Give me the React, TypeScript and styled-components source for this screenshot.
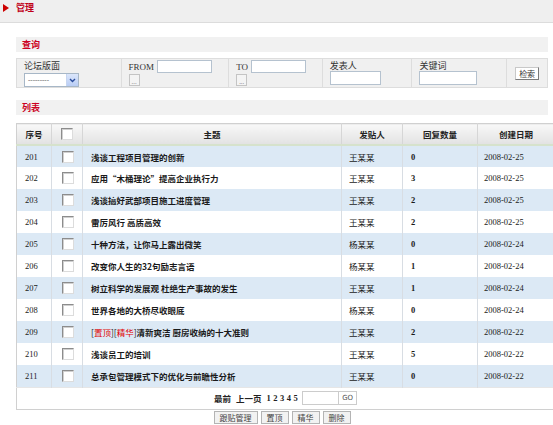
import styled, { createGlobalStyle } from "styled-components";

const GlobalStyle = createGlobalStyle`
  html, body {
    margin: 0;
    padding: 0;
    background: #ffffff;
  }
  body {
    font-family: "Noto Sans CJK SC", "Liberation Sans", sans-serif;
    font-size: 9px;
    color: #222222;
  }
`;

const cjk = `"Noto Sans CJK SC", "Liberation Sans", sans-serif`;
const serif = `"Liberation Serif", "Noto Sans CJK SC", serif`;

const TopBar = styled.div`
  height: 23px;
  box-sizing: border-box;
  background: #efefef;
  border-bottom: 1px solid #dcdcdc;
  display: flex;
  align-items: center;
  padding-left: 3px;
  gap: 7px;
`;

const Arrow = styled.span`
  width: 0;
  height: 0;
  border-top: 4px solid transparent;
  border-bottom: 4px solid transparent;
  border-left: 6px solid #cc0000;
  margin-top: -6px;
`;

const PageTitle = styled.div`
  font-family: ${cjk};
  font-weight: 700;
  font-size: 9px;
  color: #c00018;
  margin-top: -7px;
`;

const Content = styled.div`
  padding: 14px 5px 0 16px;
  display: flex;
  flex-direction: column;
`;

const SectionHead = styled.div<{ $gap: number }>`
  height: 15px;
  background: #f1f1f1;
  display: flex;
  align-items: center;
  padding-left: 6px;
  font-weight: 700;
  font-size: 9px;
  color: #cc0022;
  margin-bottom: ${(p) => p.$gap}px;
`;

const QueryBar = styled.div`
  display: flex;
  height: 30px;
  box-sizing: border-box;
  background: #f0f0f0;
  border: 1px solid #dddddd;
  margin-bottom: 12px;
`;

const QueryCell = styled.div<{ $w: number; $center?: boolean }>`
  width: ${(p) => p.$w}px;
  box-sizing: border-box;
  border-left: 1px solid #dddddd;
  padding: 1px 0 0 7px;
  display: flex;
  flex-direction: column;
  justify-content: ${(p) => (p.$center ? "center" : "flex-start")};
  &:first-child {
    border-left: none;
  }
`;

const Label = styled.div`
  font-size: 9px;
  color: #333333;
  line-height: 11px;
  height: 11px;
`;

const LatinLabel = styled.span`
  font-family: ${serif};
  font-size: 9px;
  color: #333333;
`;

const InlineRow = styled.div`
  display: flex;
  align-items: center;
  gap: 3px;
`;

const TextBox = styled.div<{ $w: number; $h?: number; $soft?: boolean }>`
  width: ${(p) => p.$w}px;
  height: ${(p) => p.$h ?? 13}px;
  box-sizing: border-box;
  background: #ffffff;
  border: 1px solid ${(p) => (p.$soft ? "#cccccc" : "#b5c2cf")};
`;

const DotsButton = styled.div`
  width: 11px;
  height: 12px;
  box-sizing: border-box;
  margin-top: 1px;
  background: #f4f4f4;
  border: 1px solid #c4c4c4;
  font-size: 6px;
  line-height: 14px;
  color: #666666;
  text-align: center;
  overflow: hidden;
`;

const Select = styled.div`
  width: 55px;
  height: 14px;
  box-sizing: border-box;
  margin-top: 2px;
  background: #ffffff;
  border: 1px solid #a7b7c7;
  display: flex;
  align-items: center;
  justify-content: space-between;
  padding-left: 3px;
  font-family: ${serif};
  font-size: 7px;
  color: #333333;
`;

const SelectArrow = styled.div`
  width: 11px;
  height: 12px;
  background: linear-gradient(#dbe6fb, #b9cdf5);
  border-left: 1px solid #c6d5f0;
  display: flex;
  align-items: center;
  justify-content: center;
`;

const SearchButton = styled.div`
  width: 24px;
  height: 13px;
  box-sizing: border-box;
  border: 1px solid;
  border-color: #c8c8c8 #7a7a7a #7a7a7a #c8c8c8;
  background: #ffffff;
  font-size: 8px;
  line-height: 11px;
  text-align: center;
  color: #333333;
  margin-left: 1px;
`;

const ListTable = styled.table`
  width: 532px;
  border-collapse: collapse;
  table-layout: fixed;
  border: 1px solid #d0d0d0;
  margin-top: 8px;
`;

const HeadCell = styled.th<{ $w: number }>`
  width: ${(p) => p.$w}px;
  height: 20px;
  padding: 0;
  background: linear-gradient(#f8f8f8, #e2e2e2);
  border-left: 1px solid #d6d6d6;
  border-bottom: 2px solid #d6e2cc;
  font-family: ${cjk};
  font-weight: 700;
  font-size: 8.5px;
  color: #222222;
  text-align: center;
  &:first-child {
    border-left: none;
  }
`;

const Row = styled.tr<{ $alt: boolean }>`
  height: 22px;
  background: ${(p) => (p.$alt ? "#dce9f5" : "#ffffff")};
`;

const Cell = styled.td<{ $pad?: number; $bold?: boolean; $serif?: boolean }>`
  padding: 0 0 0 ${(p) => p.$pad ?? 8}px;
  border-left: 1px solid #d8dde3;
  font-family: ${(p) => (p.$serif ? serif : cjk)};
  font-weight: ${(p) => (p.$bold ? 700 : 400)};
  font-size: 8.5px;
  color: #1a1a1a;
  white-space: nowrap;
  overflow: hidden;
  &:first-child {
    border-left: none;
  }
`;

const Check = styled.span<{ $center?: boolean }>`
  display: block;
  width: 12px;
  height: 12px;
  box-sizing: border-box;
  margin: ${(p) => (p.$center ? "0 auto" : "0 0 0 2px")};
  background: #ffffff;
  border: 1px solid;
  border-color: #8c8c8c #dcdcdc #dcdcdc #8c8c8c;
  box-shadow: inset 1px 1px 0 #d0d0d0;
`;

const Tag = styled.span`
  font-weight: 400;
  color: #e00000;
`;

const Bracket = styled.span`
  color: #222222;
`;

const PagerCell = styled.td`
  height: 21px;
  padding: 0;
  background: #ffffff;
  border-top: 1px solid #e6e6e6;
`;

const Pager = styled.div`
  display: flex;
  align-items: center;
  justify-content: center;
  gap: 5px;
  font-family: ${cjk};
  font-weight: 700;
  font-size: 8.5px;
  color: #222222;
`;

const PageNums = styled.span`
  font-family: ${serif};
  font-weight: 700;
  letter-spacing: 2.5px;
`;

const PagerForm = styled.div`
  display: flex;
  align-items: center;
  margin-left: -3px;
`;

const GoButton = styled.div`
  height: 14px;
  box-sizing: border-box;
  padding: 0 3px;
  border: 1px solid #cccccc;
  border-left: none;
  background: #ffffff;
  font-family: "DejaVu Sans", sans-serif;
  font-weight: 400;
  font-size: 7px;
  line-height: 12px;
  color: #555555;
`;

const ActionBar = styled.div`
  display: flex;
  justify-content: center;
  gap: 3px;
  padding-top: 1px;
  width: 532px;
`;

const ActionButton = styled.div`
  height: 13px;
  box-sizing: border-box;
  padding: 0 5px;
  background: #f2f2f2;
  border: 1px solid #b4b4b4;
  font-size: 8px;
  line-height: 11px;
  color: #444444;
`;

type Post = {
  id: number;
  title: string;
  author: string;
  replies: number;
  date: string;
  tags?: string[];
};

const posts: Post[] = [
  { id: 201, title: "浅谈工程项目管理的创新", author: "王某某", replies: 0, date: "2008-02-25" },
  { id: 202, title: "应用“木桶理论”提高企业执行力", author: "王某某", replies: 3, date: "2008-02-25" },
  { id: 203, title: "浅谈搞好武部项目施工进度管理", author: "王某某", replies: 2, date: "2008-02-25" },
  { id: 204, title: "雷厉风行 高质高效", author: "王某某", replies: 2, date: "2008-02-25" },
  { id: 205, title: "十种方法，让你马上露出微笑", author: "杨某某", replies: 0, date: "2008-02-24" },
  { id: 206, title: "改变你人生的32句励志言语", author: "杨某某", replies: 1, date: "2008-02-24" },
  { id: 207, title: "树立科学的发展观 杜绝生产事故的发生", author: "王某某", replies: 1, date: "2008-02-24" },
  { id: 208, title: "世界各地的大桥尽收眼底", author: "杨某某", replies: 0, date: "2008-02-24" },
  { id: 209, title: "清新爽洁 厨房收纳的十大准则", author: "王某某", replies: 2, date: "2008-02-22", tags: ["置顶", "精华"] },
  { id: 210, title: "浅谈员工的培训", author: "王某某", replies: 5, date: "2008-02-22" },
  { id: 211, title: "总承包管理模式下的优化与前瞻性分析", author: "王某某", replies: 0, date: "2008-02-22" },
];

const columns = [
  { label: "序号", w: 34 },
  { label: "", w: 30 },
  { label: "主题", w: 258 },
  { label: "发贴人", w: 60 },
  { label: "回复数量", w: 74 },
  { label: "创建日期", w: 76 },
];

export default function App() {
  return (
    <>
      <GlobalStyle />
      <TopBar>
        <Arrow />
        <PageTitle>管理</PageTitle>
      </TopBar>
      <Content>
        <SectionHead $gap={6}>查询</SectionHead>
        <QueryBar>
          <QueryCell $w={104}>
            <Label>论坛版面</Label>
            <Select>
              ---------
              <SelectArrow>
                <svg width="7" height="5" viewBox="0 0 7 5">
                  <path d="M1 1 L3.5 3.5 L6 1" fill="none" stroke="#2a4d9c" strokeWidth="1.4" />
                </svg>
              </SelectArrow>
            </Select>
          </QueryCell>
          <QueryCell $w={108}>
            <InlineRow>
              <LatinLabel>FROM</LatinLabel>
              <TextBox $w={55} />
            </InlineRow>
            <DotsButton>...</DotsButton>
          </QueryCell>
          <QueryCell $w={94}>
            <InlineRow>
              <LatinLabel>TO</LatinLabel>
              <TextBox $w={55} />
            </InlineRow>
            <DotsButton>...</DotsButton>
          </QueryCell>
          <QueryCell $w={90}>
            <Label>发表人</Label>
            <TextBox $w={51} $h={14} />
          </QueryCell>
          <QueryCell $w={95}>
            <Label>关键词</Label>
            <TextBox $w={58} $h={14} />
          </QueryCell>
          <QueryCell $w={41} $center>
            <SearchButton>检索</SearchButton>
          </QueryCell>
        </QueryBar>
        <SectionHead $gap={0}>列表</SectionHead>
        <ListTable>
          <thead>
            <tr>
              {columns.map((c, i) => (
                <HeadCell key={i} $w={c.w}>
                  {i === 1 ? <Check $center /> : c.label}
                </HeadCell>
              ))}
            </tr>
          </thead>
          <tbody>
            {posts.map((p, i) => (
              <Row key={p.id} $alt={i % 2 === 0}>
                <Cell $serif>{p.id}</Cell>
                <Cell>
                  <Check />
                </Cell>
                <Cell $bold>
                  {p.tags?.map((t) => (
                    <Tag key={t}>
                      <Bracket>[</Bracket>
                      {t}
                      <Bracket>]</Bracket>
                    </Tag>
                  ))}
                  {p.title}
                </Cell>
                <Cell $pad={7}>{p.author}</Cell>
                <Cell $serif $bold>
                  {p.replies}
                </Cell>
                <Cell $serif $pad={6}>
                  {p.date}
                </Cell>
              </Row>
            ))}
            <tr>
              <PagerCell colSpan={6}>
                <Pager>
                  <span>最前</span>
                  <span>上一页</span>
                  <PageNums>12345</PageNums>
                  <PagerForm>
                    <TextBox $w={37} $h={14} $soft />
                    <GoButton>GO</GoButton>
                  </PagerForm>
                </Pager>
              </PagerCell>
            </tr>
          </tbody>
        </ListTable>
        <ActionBar>
          <ActionButton>跟贴管理</ActionButton>
          <ActionButton>置顶</ActionButton>
          <ActionButton>精华</ActionButton>
          <ActionButton>删除</ActionButton>
        </ActionBar>
      </Content>
    </>
  );
}
